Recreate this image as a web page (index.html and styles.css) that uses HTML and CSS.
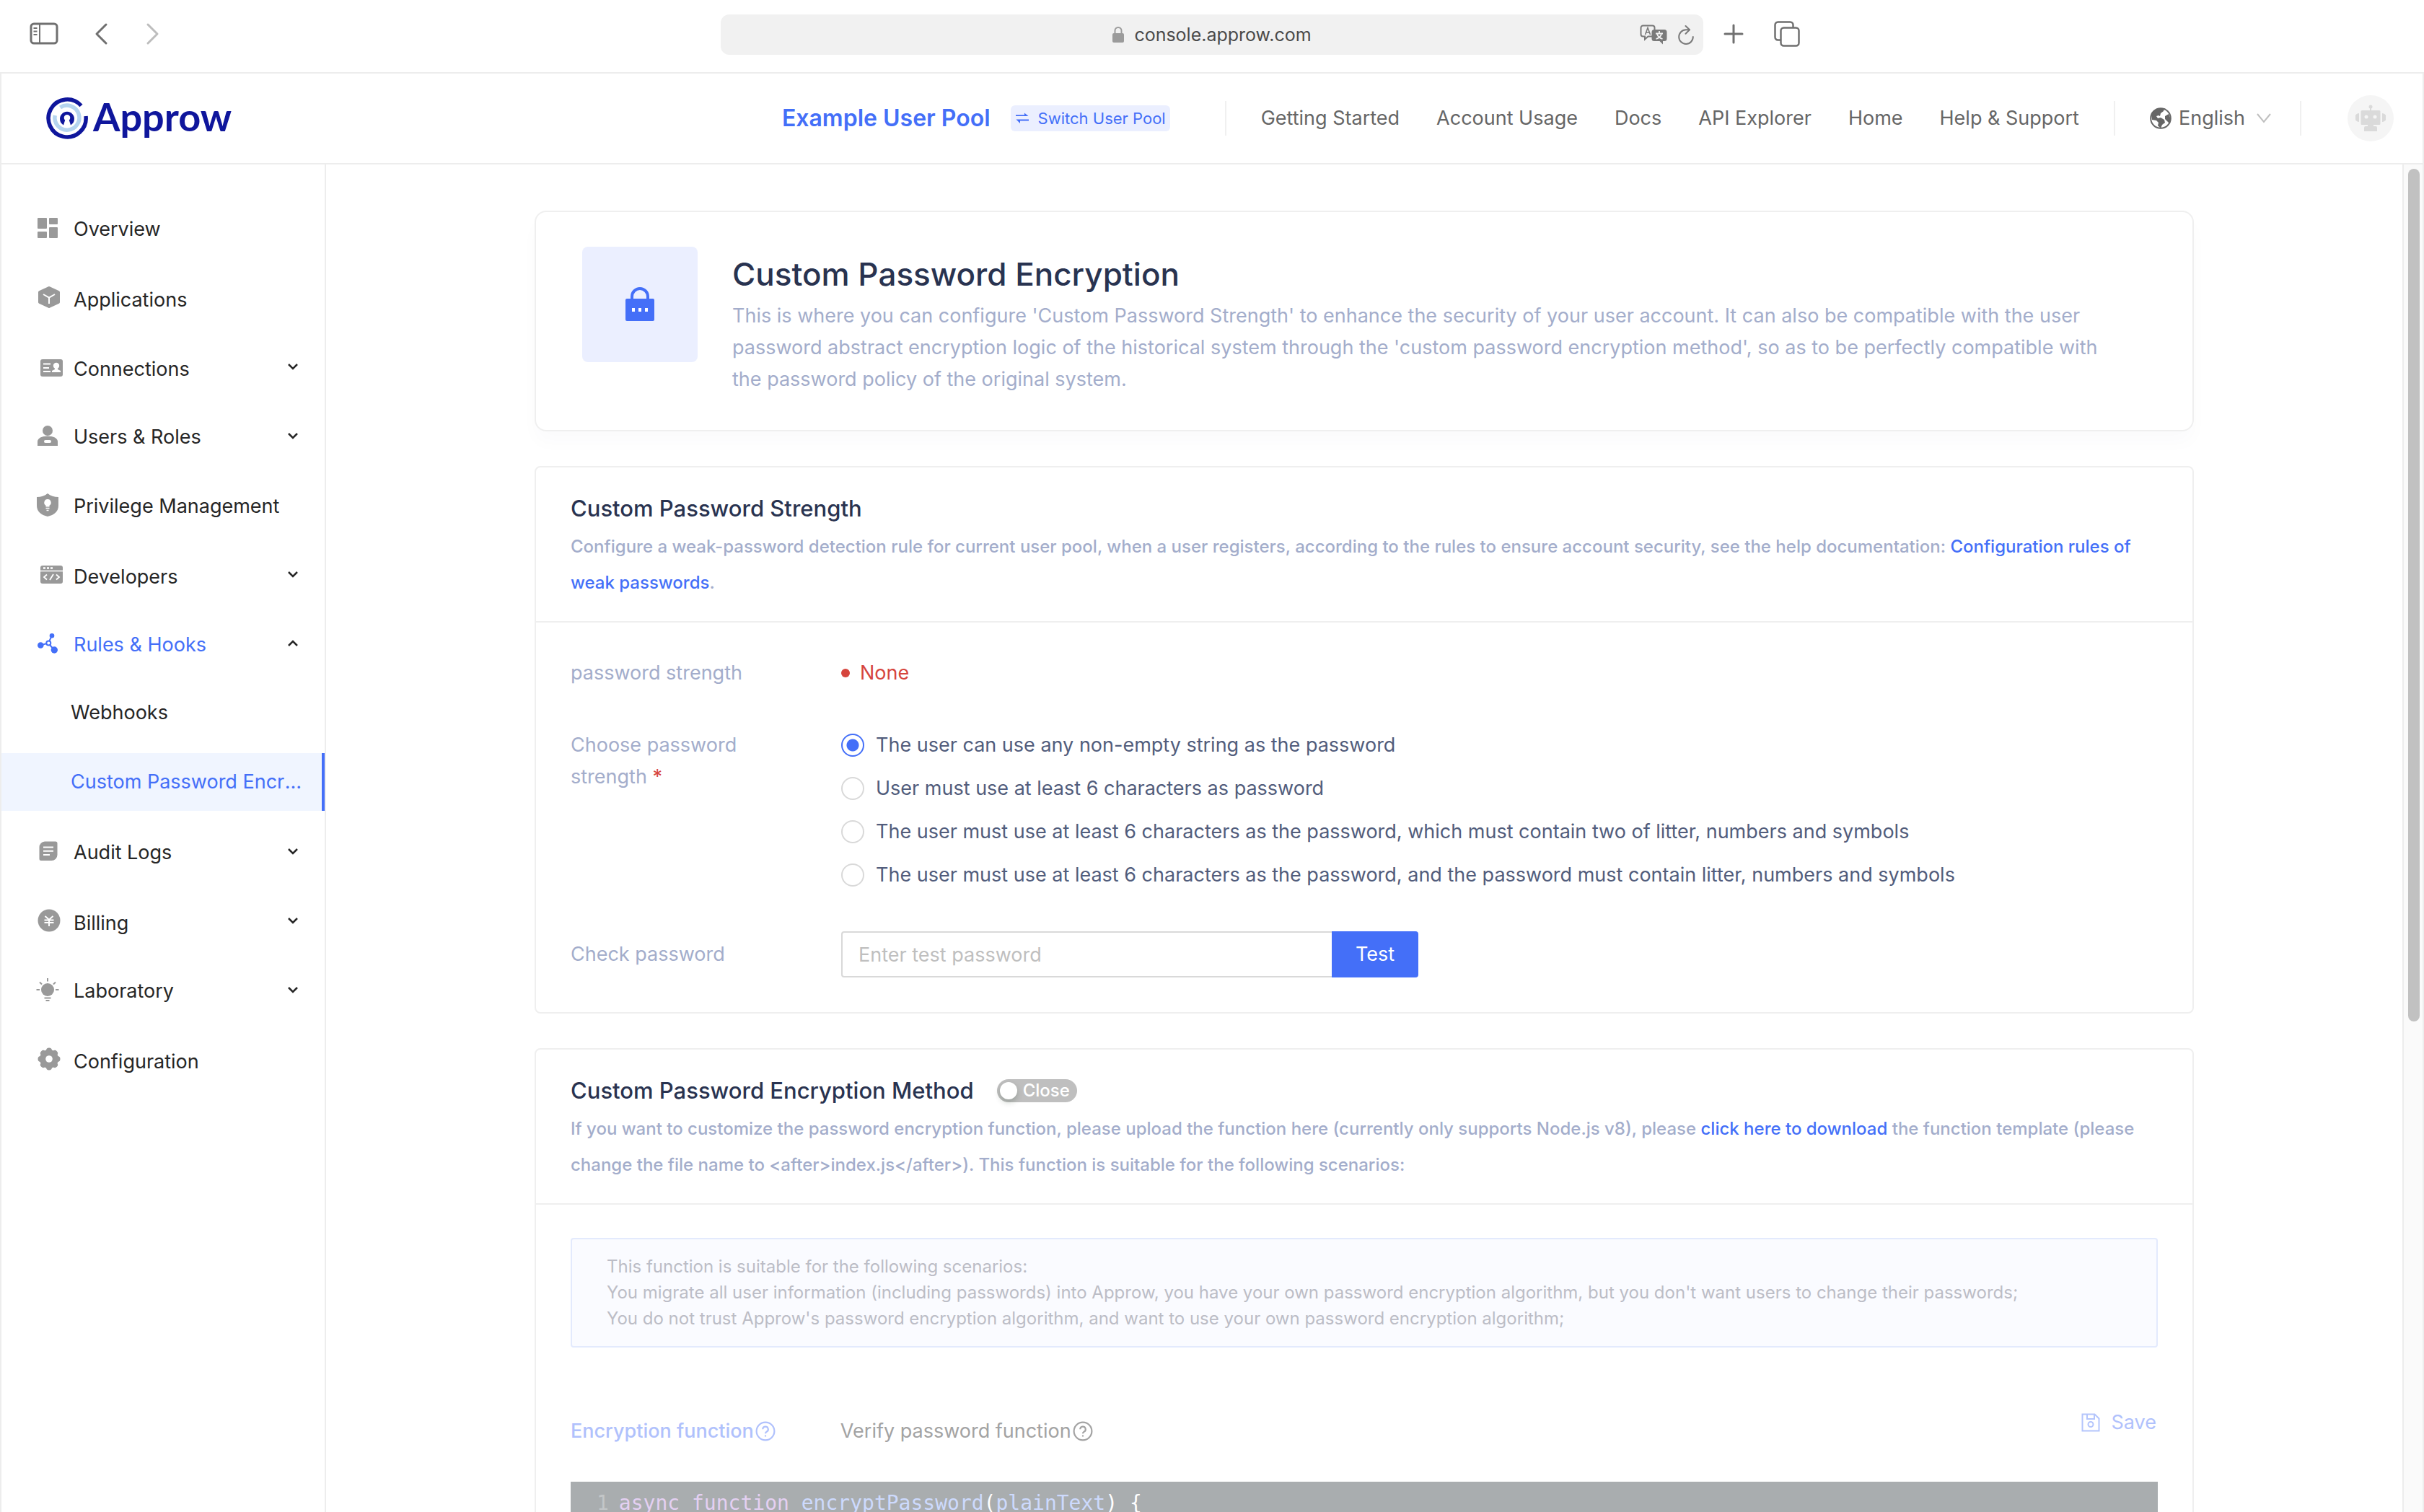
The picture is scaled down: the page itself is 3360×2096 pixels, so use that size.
FILE: index.html
```html
<!DOCTYPE html>
<html lang="en">
<head>
<meta charset="utf-8">
<title>Custom Password Encryption - Approw</title>
<link rel="stylesheet" href="styles.css">
</head>
<body>
<div class="window">
  <div class="toolbar">
    <div class="toolbar-left">
      <button class="tool" aria-label="Show sidebar"><svg width="40" height="32" viewBox="0 0 40 32" fill="none" stroke="#707070" stroke-width="3"><rect x="2" y="2" width="36" height="27" rx="4"/><path d="M14 2v27" stroke-width="2"/><path d="M5.500 8h5M5.500 12.500h5M5.500 17h5" stroke-width="2"/></svg></button>
      <button class="tool" aria-label="Back"><svg width="20" height="32" viewBox="0 0 20 32" fill="none" stroke="#707070" stroke-width="3" stroke-linecap="round" stroke-linejoin="round"><path d="M16 3 3 16l13 13"/></svg></button>
      <button class="tool" aria-label="Forward"><svg width="20" height="32" viewBox="0 0 20 32" fill="none" stroke="#bdbdbd" stroke-width="3" stroke-linecap="round" stroke-linejoin="round"><path d="m4 3 13 13L4 29"/></svg></button>
    </div>
    <div class="address">
      <span class="address-text">
        <svg width="16" height="26" viewBox="0 0 16 26"><path d="M3.500 12V7.500a4.500 4.500 0 0 1 9 0V12" fill="none" stroke="#9b9b9b" stroke-width="2"/><rect y="11" width="16" height="13" rx="2" fill="#9b9b9b"/></svg>
        console.approw.com
      </span>
      <span class="address-tools">
        <button class="tool" aria-label="Translate"><svg width="38" height="28" viewBox="0 0 38 28"><path d="M4.500 1.500h13a3 3 0 0 1 3 3v9a3 3 0 0 1-3 3h-6L7 20.500v-4H4.500a3 3 0 0 1-3-3v-9a3 3 0 0 1 3-3z" fill="none" stroke="#7a7a7a" stroke-width="2"/><path d="m7.500 14 3.500-9.500L14.500 14M8.700 11h4.600" fill="none" stroke="#7a7a7a" stroke-width="1.600"/><path d="M20 7h14a3.500 3.500 0 0 1 3.500 3.500v9A3.500 3.500 0 0 1 34 23h-2v4.500L27.500 23H20a3.500 3.500 0 0 1-3.500-3.500v-9A3.500 3.500 0 0 1 20 7z" fill="#7a7a7a"/><path d="M27 9v2.500M22 12.500h10M24 13c.8 3 3.500 5.800 7.500 7M30 13c-.8 3-3.500 5.800-7.500 7" fill="none" stroke="#f1f1f1" stroke-width="1.800"/></svg></button>
        <button class="tool" aria-label="Reload"><svg width="24" height="28" viewBox="0 0 24 28" fill="none" stroke="#7a7a7a" stroke-width="2" stroke-linecap="round" stroke-linejoin="round"><path d="M17 7.300H12A9.800 9.800 0 1 0 21.800 17"/><path d="m11.500 2 5.500 5.300-5.500 5.400"/></svg></button>
      </span>
    </div>
    <div class="toolbar-right">
      <button class="tool" aria-label="New tab"><svg width="28" height="28" viewBox="0 0 28 28" stroke="#707070" stroke-width="3" stroke-linecap="round"><path d="M14 2v24M2 14h24"/></svg></button>
      <button class="tool" aria-label="Tab overview"><svg width="36" height="36" viewBox="0 0 36 36" fill="none" stroke="#707070" stroke-width="2.500"><path d="M9 26.500H5.500a4 4 0 0 1-4-4v-17a4 4 0 0 1 4-4h17a4 4 0 0 1 4 4V9"/><rect x="9.500" y="9.500" width="25" height="25" rx="4"/></svg></button>
    </div>
  </div>

  <div class="app">
    <header class="header">
      <a class="logo" href="#">
        <svg width="60" height="60" viewBox="0 0 60 60" fill="none" stroke-width="5.500"><path d="M49.500 12.500A26 26 0 1 0 56 27" stroke="#0f169c"/><path d="M20.500 15A17 17 0 1 1 13.200 26" stroke="#b5d4ef"/><path d="M25 39.500A10 10 0 1 1 35 39.500L32.800 32.500A4.300 4.300 0 1 0 27.200 32.500z" fill="#0f169c"/></svg>
        <span class="logo-text">Approw</span>
      </a>
      <div class="pool">
        <a class="pool-name" href="#">Example User Pool</a>
        <button class="pool-switch"><svg width="20" height="16" viewBox="0 0 20 16" fill="#446ff8"><path d="M1 5h17.500L13 .5V3.200H1zM19 9.500H1.500L7 15v-3.500h12z"/></svg>Switch User Pool</button>
      </div>
      <nav class="top-nav" aria-label="Main">
        <a href="#">Getting Started</a>
        <a href="#">Account Usage</a>
        <a href="#">Docs</a>
        <a href="#">API Explorer</a>
        <a href="#">Home</a>
        <a href="#">Help &amp; Support</a>
      </nav>
      <button class="language">
        <svg class="globe" width="30" height="30" viewBox="0 0 30 30"><circle cx="15" cy="15" r="13.800" fill="#fff" stroke="#666" stroke-width="2"/><path d="M15 1.500C9 1.500 4 5 2 10l1 7 6 1 3 3-1 4 4 4 2-5 4-3-1-4-5-3-4 1-2-3 3-1 2 1 1-4 4-3 1-3 2-1zM21 12l5-3 3 7-2 6-3-3-3-3z" fill="#666"/></svg>
        English
        <svg class="caret" width="20" height="16" viewBox="0 0 20 16" fill="none" stroke="#bfbfbf" stroke-width="2"><path d="m1 2 9 11 9-11"/></svg>
      </button>
      <button class="avatar" aria-label="Account">
        <svg width="42" height="40" viewBox="0 0 42 40" fill="#dadada"><circle cx="21" cy="4" r="2.500"/><path d="M20 5h2v5h-2zM9 9h24a1.500 1.500 0 0 1 1.500 1.500v17A1.500 1.500 0 0 1 33 29h-8v2h3a2 2 0 0 1 2 2v5H12v-5a2 2 0 0 1 2-2h3v-2H9a1.500 1.500 0 0 1-1.500-1.500v-17A1.500 1.500 0 0 1 9 9zM5 13v12a6 6 0 0 1 0-12zM37 13v12a6 6 0 0 0 0-12z"/><circle cx="15" cy="18" r="2.500" fill="#f5f5f5"/><circle cx="27" cy="18" r="2.500" fill="#f5f5f5"/></svg>
      </button>
    </header>

    <div class="body">
      <nav class="sidebar" aria-label="Console">
        <ul class="menu">
          <li><a class="item" href="#"><svg class="icon" viewBox="0 0 40 32"><rect x="4" y="2" width="13" height="15" rx="1"/><rect x="4" y="21" width="13" height="9" rx="1"/><rect x="20" y="2" width="12" height="9" rx="1"/><rect x="20" y="15" width="12" height="15" rx="1"/></svg><span class="label">Overview</span></a></li>
          <li><a class="item item-tall" href="#"><svg class="icon" viewBox="0 0 40 32"><path d="m20 3 13 6v14l-13 6-13-6V9z" stroke="#999" stroke-width="4" stroke-linejoin="round"/><path d="m12 12 8 4.500 8-4.500M20 16.500V25" fill="none" stroke="#fff" stroke-width="2"/></svg><span class="label">Applications</span></a></li>
          <li><a class="item item-tall" href="#"><svg class="icon" viewBox="0 0 40 32"><rect x="8" y="6" width="31" height="24" rx="3"/><path d="M12 12.500h10M12 18h8M12 23h10" stroke="#fff" stroke-width="2"/><circle cx="30" cy="15" r="4.200" fill="#fff"/><path d="M28 18h4v2l4 2v2H24v-2l4-2z" fill="#fff"/></svg><span class="label">Connections</span><svg class="chevron" viewBox="0 0 16 12"><path d="m2 3 6 6 6-6"/></svg></a></li>
          <li><a class="item" href="#"><svg class="icon" viewBox="0 0 40 32"><circle cx="18" cy="9" r="7"/><path d="M4 30v-6c0-4.500 6-7.500 14-7.500S32 19.500 32 24v6z"/><rect x="13" y="22" width="10" height="4" rx="2" fill="#fff"/></svg><span class="label">Users &amp; Roles</span><svg class="chevron" viewBox="0 0 16 12"><path d="m2 3 6 6 6-6"/></svg></a></li>
          <li><a class="item" href="#"><svg class="icon" viewBox="0 0 40 32"><path d="M18 0c4 3.500 9 5 15 5v12c0 8-6 13-15 15C9 30 3 25 3 17V5c6 0 11-1.500 15-5z"/><path d="M18 8a4.700 4.700 0 0 1 2.500 8.700V18.500h-5v-1.800A4.700 4.700 0 0 1 18 8z" fill="#fff"/><path d="M15.500 20.500h5M16.500 23.500h3" stroke="#fff" stroke-width="1.500"/></svg><span class="label">Privilege Management</span></a></li>
          <li><a class="item item-tall" href="#"><svg class="icon" viewBox="0 0 40 32"><rect x="8" y="4" width="31" height="25" rx="3"/><path d="M8 11.500h31" stroke="#fff" stroke-width="1.500"/><path d="M12 7.500h3M17 7.500h3M22 7.500h3" stroke="#fff" stroke-width="2.500"/><path d="m17 16.500-4 3.500 4 3.500M30 16.500l4 3.500-4 3.500M26 16l-5 8" fill="none" stroke="#fff" stroke-width="1.800"/></svg><span class="label">Developers</span><svg class="chevron" viewBox="0 0 16 12"><path d="m2 3 6 6 6-6"/></svg></a></li>
          <li><a class="item item-open" href="#"><svg class="icon" viewBox="0 0 40 32"><path d="M8 18.500 19 15.500 24 5M19 15.500 27 25" fill="none" stroke="#446ff8" stroke-width="2"/><circle cx="8.300" cy="18.500" r="4.300"/><circle cx="24" cy="5.300" r="3.300"/><circle cx="27.300" cy="25" r="4.700"/><circle cx="19.300" cy="15.500" r="3" fill="#fff" stroke="#446ff8" stroke-width="2"/></svg><span class="label">Rules &amp; Hooks</span><svg class="chevron" viewBox="0 0 16 12"><path d="m2 9 6-6 6 6"/></svg></a>
            <ul class="submenu">
              <li><a class="subitem" href="#"><span class="sublabel">Webhooks</span></a></li>
              <li><a class="subitem subitem-active" href="#" aria-current="page"><span class="sublabel">Custom Password Encryption</span></a></li>
            </ul>
          </li>
          <li><a class="item" href="#"><svg class="icon" viewBox="0 0 40 32"><path d="M14 2.500h15a2.500 2.500 0 0 1 2.500 2.500v16a8 8 0 0 1-8 8H9A2.500 2.500 0 0 1 6.500 26.500V10.500a8 8 0 0 1 7.500-8z"/><path d="M12 10.500h14M12 15.700h14M12 21h9" stroke="#fff" stroke-width="2"/></svg><span class="label">Audit Logs</span><svg class="chevron" viewBox="0 0 16 12"><path d="m2 3 6 6 6-6"/></svg></a></li>
          <li><a class="item item-tall" href="#"><svg class="icon" viewBox="0 0 40 32"><circle cx="20" cy="16" r="15.500"/><path d="m14.500 10 5.500 5 5.500-5M20 15v9M13.500 15.500h13M13.500 19h13" fill="none" stroke="#fff" stroke-width="2"/></svg><span class="label">Billing</span><svg class="chevron" viewBox="0 0 16 12"><path d="m2 3 6 6 6-6"/></svg></a></li>
          <li><a class="item" href="#"><svg class="icon" viewBox="0 0 40 32"><circle cx="18" cy="16" r="9"/><path d="M18 0v4.500M2.500 16H7M29 16h4.500M7 5.500 10 8.500M29 5.500 26 8.500M13.500 27.500h9M15.500 31h5" stroke="#999" stroke-width="2"/></svg><span class="label">Laboratory</span><svg class="chevron" viewBox="0 0 16 12"><path d="m2 3 6 6 6-6"/></svg></a></li>
          <li><a class="item item-tall" href="#"><svg class="icon" viewBox="0 0 40 32"><circle cx="20" cy="16" r="13"/><path d="M20 4.500v23M8.500 16h23M12 8l16 16M12 24 28 8" stroke="#999" stroke-width="8" stroke-linecap="round"/><circle cx="20" cy="16" r="4.800" fill="#fff"/></svg><span class="label">Configuration</span></a></li>
        </ul>
      </nav>

      <main class="content">
        <section class="card intro">
          <div class="intro-icon"><svg width="40" height="48" viewBox="0 0 40 48"><path d="M9 19v-6a11 11 0 0 1 22 0v6" fill="none" stroke="#446ff8" stroke-width="4"/><rect y="16" width="40" height="31" rx="2" fill="#446ff8"/><path d="M9 29h4v5H9zM18 29h4v5h-4zM27 29h4v5h-4z" fill="#fff"/></svg></div>
          <div class="intro-text">
            <h1>Custom Password Encryption</h1>
            <p>This is where you can configure 'Custom Password Strength' to enhance the security of your user account. It can also be compatible with the user password abstract encryption logic of the historical system through the 'custom password encryption method', so as to be perfectly compatible with the password policy of the original system.</p>
          </div>
        </section>

        <section class="card">
          <div class="card-head">
            <div class="card-title"><h2>Custom Password Strength</h2></div>
            <p>Configure a weak-password detection rule for current user pool, when a user registers, according to the rules to ensure account security, see the help documentation: <a href="#">Configuration rules of weak passwords</a>.</p>
          </div>
          <form class="form">
            <div class="row row-status">
              <span class="field-label">password strength</span>
              <span class="status">None</span>
            </div>
            <div class="row row-choice" role="radiogroup" aria-labelledby="strength-label">
              <span class="field-label" id="strength-label">Choose password strength <b class="required">*</b></span>
              <div class="radios">
                <label class="radio"><input type="radio" name="strength" checked>The user can use any non-empty string as the password</label>
                <label class="radio"><input type="radio" name="strength">User must use at least 6 characters as password</label>
                <label class="radio"><input type="radio" name="strength">The user must use at least 6 characters as the password, which must contain two of litter, numbers and symbols</label>
                <label class="radio"><input type="radio" name="strength">The user must use at least 6 characters as the password, and the password must contain litter, numbers and symbols</label>
              </div>
            </div>
            <div class="row row-check">
              <label class="field-label" for="check">Check password</label>
              <div class="check"><input id="check" type="text" placeholder="Enter test password"><button type="button">Test</button></div>
            </div>
          </form>
        </section>

        <section class="card">
          <div class="card-head">
            <div class="card-title"><h2>Custom Password Encryption Method</h2><button class="switch" role="switch" aria-checked="false">Close</button></div>
            <p>If you want to customize the password encryption function, please upload the function here (currently only supports Node.js v8), please <a href="#">click here to download</a> the function template (please change the file name to &lt;after&gt;index.js&lt;/after&gt;). This function is suitable for the following scenarios:</p>
          </div>
          <div class="method">
            <div class="notice">
              <p>This function is suitable for the following scenarios:</p>
              <p>You migrate all user information (including passwords) into Approw, you have your own password encryption algorithm, but you don't want users to change their passwords;</p>
              <p>You do not trust Approw's password encryption algorithm, and want to use your own password encryption algorithm;</p>
            </div>
            <div class="tabs">
              <button class="tab tab-active">Encryption function<svg class="help" viewBox="0 0 26 26"><circle cx="13" cy="13" r="11.500"/><path d="M9.500 10.500a3.500 3.500 0 1 1 5 3.200c-1 .5-1.500 1.100-1.500 2.300M13 18v2"/></svg></button>
              <button class="tab">Verify password function<svg class="help" viewBox="0 0 26 26"><circle cx="13" cy="13" r="11.500"/><path d="M9.500 10.500a3.500 3.500 0 1 1 5 3.200c-1 .5-1.500 1.100-1.500 2.300M13 18v2"/></svg></button>
              <button class="save"><svg width="26" height="26" viewBox="0 0 26 26" fill="none" stroke="#b4c5fc" stroke-width="2"><path d="M1.500 1.500h17l6 6v17h-23zM8 1.500V8h10V1.500"/><circle cx="13" cy="15.500" r="3.500"/></svg>Save</button>
            </div>
            <pre class="code"><span class="line-no">1</span><code><span class="kw">async</span> <span class="kw">function</span> <span class="fn">encryptPassword</span>(<span class="fn">plainText</span>) {</code></pre>
          </div>
        </section>
      </main>

      <div class="scrollbar"><div class="thumb"></div></div>
    </div>
  </div>
</div>
</body>
</html>
```
FILE: styles.css
```css
* { box-sizing: border-box; }

body {
  margin: 0;
  background: #fff;
  color: #262626;
  font-family: Inter, "Liberation Sans", sans-serif;
  font-size: 27px;
  line-height: 44px;
}

h1, h2, p, ul, pre { margin: 0; padding: 0; }
ul { list-style: none; }
a { color: #446ff8; text-decoration: none; }
button { padding: 0; border: 0; background: none; color: inherit; font: inherit; cursor: pointer; }
svg { display: block; flex: none; }

.window { display: flex; flex-direction: column; height: 100vh; overflow: hidden; }

/* Browser toolbar */
.toolbar {
  display: grid;
  flex: none;
  grid-template-columns: 1fr minmax(0, 1362px) 1fr;
  padding: 20px 0 24px;
  border-bottom: 2px solid #ededed;
}
.toolbar-left, .toolbar-right { display: flex; align-items: center; height: 54px; }
.toolbar-left { gap: 50px; padding-left: 41px; }
.toolbar-right { gap: 42px; padding-left: 28px; }
.address {
  display: grid;
  grid-template-columns: 1fr auto 1fr;
  align-items: center;
  height: 56px;
  padding: 0 12px;
  border-radius: 12px;
  background: #f1f1f1;
  color: #4a4a4a;
  font-size: 25px;
}
.address-text { display: flex; grid-column: 2; align-items: center; gap: 14px; }
.address-tools { display: flex; justify-content: flex-end; gap: 14px; }

/* Console header */
.app {
  display: flex;
  flex: 1;
  flex-direction: column;
  min-height: 0;
  border: solid #ededed;
  border-width: 0 2px;
}
.header {
  display: flex;
  flex: none;
  align-items: center;
  height: 126px;
  padding: 0 40px 0 61px;
  border-bottom: 2px solid #ededed;
}
.logo { display: flex; align-items: center; gap: 6px; margin-right: auto; color: #0f169c; }
.logo-text { padding-bottom: 4px; font-family: Lato, sans-serif; font-size: 54px; font-weight: 700; line-height: 60px; }
.pool { display: flex; align-items: center; gap: 28px; padding-right: 76px; }
.pool-name { font-size: 32px; font-weight: 600; }
.pool-switch {
  display: flex;
  align-items: center;
  gap: 12px;
  height: 36px;
  padding: 0 6px;
  border-radius: 6px;
  background: #ebefff;
  color: #446ff8;
  font-size: 22px;
}
.top-nav, .language { display: flex; align-items: center; height: 48px; border-left: 2px solid #f0f0f0; color: #666; }
.top-nav { gap: 51px; padding: 0 48px; }
.top-nav a { color: inherit; }
.language { gap: 10px; padding: 0 40px 0 48px; border-right: 2px solid #f0f0f0; }
.caret { margin-left: 6px; }
.avatar {
  display: flex;
  align-items: center;
  justify-content: center;
  width: 64px;
  height: 64px;
  margin-left: 64px;
  border-radius: 50%;
  background: #f5f5f5;
}

.body { display: flex; flex: 1; min-height: 0; }

/* Sidebar */
.sidebar { flex: none; width: 450px; border-right: 2px solid #ededed; }
.menu { padding-top: 48px; }
.item { display: flex; align-items: center; height: 80px; margin-bottom: 16px; padding: 0 36px 0 46px; color: #262626; }
.icon { width: 40px; height: 32px; fill: #999; overflow: visible; }
.label { flex: 1; padding: 4px 0 0 14px; white-space: nowrap; }
.item-tall .label { padding-top: 8px; }
.item-open { color: #446ff8; }
.item-open .icon { fill: #446ff8; }
.chevron { width: 16px; height: 12px; fill: none; stroke: #262626; stroke-width: 2.5; }
.subitem { display: flex; align-items: center; height: 80px; margin-bottom: 16px; padding: 0 20px 0 96px; border-right: 4px solid transparent; color: #262626; }
.subitem-active { border-right-color: #446ff8; background: #f0f5ff; color: #446ff8; }
.sublabel { overflow: hidden; text-overflow: ellipsis; white-space: nowrap; }

/* Content */
.content {
  display: flex;
  flex: 1;
  flex-direction: column;
  gap: 48px;
  min-width: 0;
  padding: 64px 48px 0;
  overflow: hidden;
}
.card { flex: none; width: 100%; max-width: 2300px; margin: 0 auto; border: 2px solid #efefef; border-radius: 8px; }

.intro {
  display: flex;
  gap: 48px;
  padding: 48px 96px 48px 64px;
  border-radius: 16px;
  box-shadow: 0 16px 24px rgba(20, 30, 80, 0.02);
}
.intro-icon {
  display: flex;
  flex: none;
  align-items: center;
  justify-content: center;
  width: 160px;
  height: 160px;
  border-radius: 8px;
  background: #ebefff;
}
.intro-text { padding-top: 8px; color: #a3adcb; }
h1 { padding-bottom: 6px; color: #293350; font-size: 44px; font-weight: 500; line-height: 60px; }
h2 { color: #293350; font-size: 31px; font-weight: 500; line-height: 44px; }

.card-head { padding: 35px 48px 28px; border-bottom: 2px solid #efefef; color: #a3adcb; font-size: 24px; font-weight: 500; line-height: 50px; }
.card-title { display: flex; align-items: center; gap: 32px; padding-bottom: 6px; }

.form { padding: 48px; }
.row { display: flex; color: #a3adcb; }
.field-label { flex: none; width: 375px; padding-right: 96px; }
.row-status { padding-bottom: 48px; }
.status { display: flex; align-items: center; gap: 14px; color: #d6453d; }
.status::before { width: 12px; height: 12px; border-radius: 50%; background: #d6453d; content: ""; }
.required { color: #d6453d; font-weight: 400; }
.row-choice { padding-bottom: 48px; }
.row-choice .field-label { padding-top: 8px; }
.radio { display: flex; align-items: center; gap: 16px; height: 60px; color: #525d7c; }
.radio input {
  appearance: none;
  flex: none;
  width: 32px;
  height: 32px;
  margin: 0;
  border: 2px solid #d9d9d9;
  border-radius: 50%;
  background: #fff;
}
.radio input:checked { border-color: #446ff8; background: radial-gradient(#446ff8 8px, #fff 9px); }
.row-check { align-items: center; }
.check { display: flex; width: 800px; }
.check input {
  flex: 1;
  min-width: 0;
  height: 64px;
  padding: 0 22px;
  border: 2px solid #d9d9d9;
  border-right: 0;
  border-radius: 4px 0 0 4px;
  color: #525d7c;
  font: inherit;
}
.check input::placeholder { color: #bfbfbf; opacity: 1; }
.check button { width: 120px; height: 64px; border-radius: 0 4px 4px 0; background: #446ff8; color: #fff; }

.switch {
  display: flex;
  align-items: center;
  gap: 8px;
  height: 32px;
  padding: 0 10px 0 4px;
  border-radius: 16px;
  background: #bfbfbf;
  color: #fff;
  font-size: 24px;
}
.switch::before { width: 24px; height: 24px; border-radius: 50%; background: #fff; box-shadow: 0 4px 8px rgba(0, 35, 11, 0.2); content: ""; }

.method { padding: 46px 48px 48px; }
.notice { padding: 20px 48px; border: 2px solid #e3eafd; border-radius: 4px; background: #fafbff; color: #bcbdc6; font-size: 24px; line-height: 36px; }
.tabs { display: flex; align-items: center; gap: 90px; height: 186px; padding-top: 46px; color: #a3a3a3; }
.tab { display: flex; align-items: center; gap: 2px; }
.tab-active { color: #b0c1fc; font-weight: 500; }
.help { width: 28px; height: 28px; fill: none; stroke: currentColor; stroke-width: 2; }
.save { display: flex; align-items: center; gap: 16px; margin: 0 2px 24px auto; color: #b0c1fc; }
.code {
  display: flex;
  gap: 14px;
  padding: 8px 36px;
  background: #a9adaf;
  color: #fff;
  font-family: "DejaVu Sans Mono", monospace;
  font-size: 28px;
  line-height: 44px;
}
.code code { font-family: inherit; }
.line-no { color: #c3c6c8; }
.kw { color: #e4d0f2; }
.fn { color: #cddafd; }

/* Page scrollbar */
.scrollbar { flex: none; width: 28px; padding: 6px; border-left: 2px solid #ededed; background: #fafafa; }
.thumb { width: 16px; height: 63.7%; border-radius: 8px; background: #c1c1c1; }
```
